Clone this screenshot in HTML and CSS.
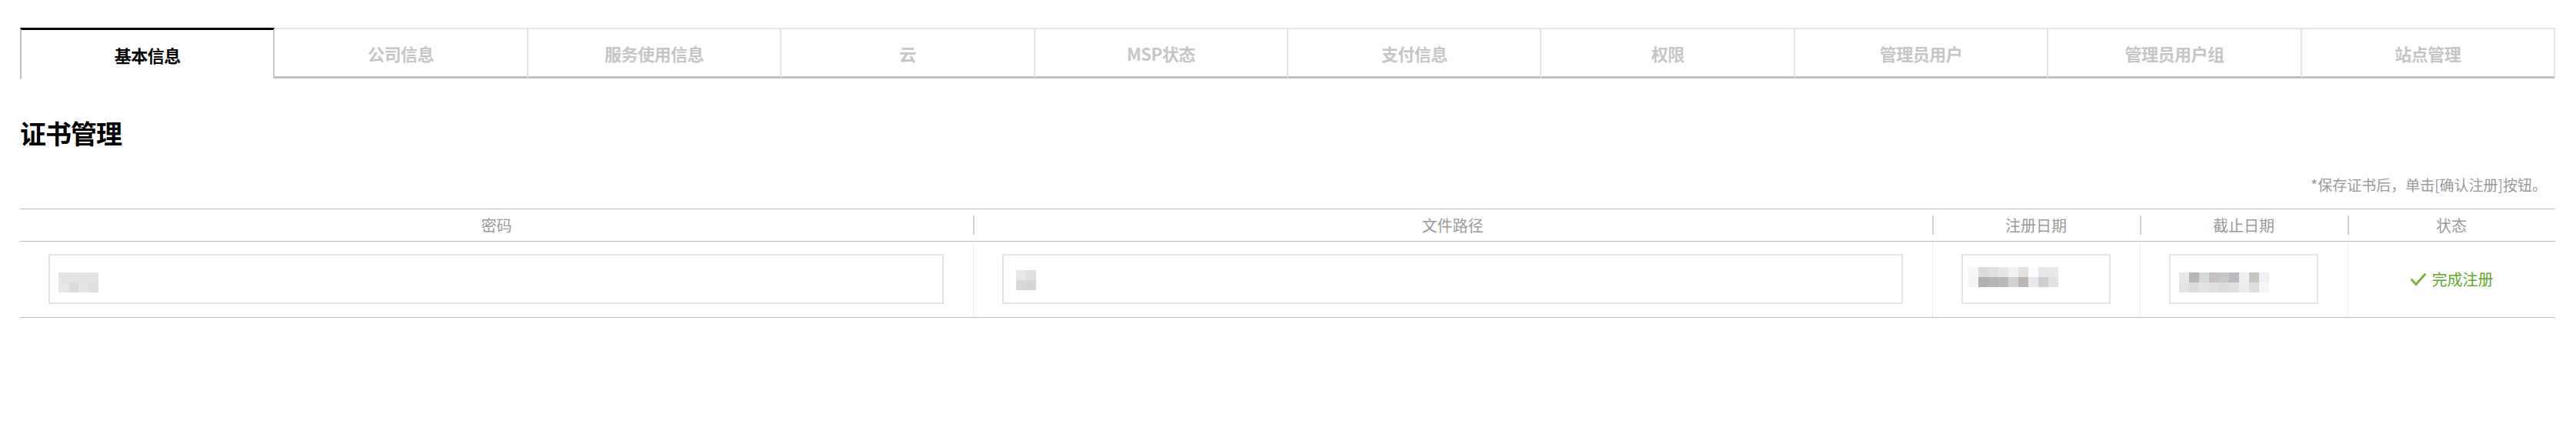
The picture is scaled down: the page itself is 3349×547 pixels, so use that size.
FILE: index.html
```html
<!DOCTYPE html>
<html lang="zh-CN">
<head>
<meta charset="utf-8">
<title>证书管理</title>
<link rel="stylesheet" href="styles.css">
</head>
<body>
<div class="page">
  <nav class="tabs">
    <div class="tab active">基本信息</div>
    <div class="tab">公司信息</div>
    <div class="tab">服务使用信息</div>
    <div class="tab">云</div>
    <div class="tab">MSP状态</div>
    <div class="tab">支付信息</div>
    <div class="tab">权限</div>
    <div class="tab">管理员用户</div>
    <div class="tab">管理员用户组</div>
    <div class="tab">站点管理</div>
  </nav>

  <h2 class="title">证书管理</h2>
  <p class="note">*保存证书后，单击[确认注册]按钮。</p>

  <div class="table">
    <div class="thead">
      <div class="th">密码</div>
      <div class="th sep">文件路径</div>
      <div class="th sep">注册日期</div>
      <div class="th sep">截止日期</div>
      <div class="th sep">状态</div>
    </div>
    <div class="trow">
      <div class="td"><div class="field"><span class="blob blob-pass"></span></div></div>
      <div class="td sep"><div class="field"><span class="blob blob-path"></span></div></div>
      <div class="td sep"><div class="field"><span class="blob blob-date1"></span></div></div>
      <div class="td sep"><div class="field"><span class="blob blob-date2"></span></div></div>
      <div class="td sep status-cell">
        <span class="status">
          <svg class="check" width="20" height="16" viewBox="0 0 20 16" aria-hidden="true">
            <path d="M1.5 8.5 L7 14.5 L18.5 1.5" fill="none" stroke="#76b43c" stroke-width="3" stroke-linecap="round" stroke-linejoin="round"/>
          </svg>
          <span class="status-text">完成注册</span>
        </span>
      </div>
    </div>
  </div>
</div>
</body>
</html>
```

FILE: styles.css
```css
html, body {
  margin: 0;
  padding: 0;
  background: #ffffff;
}

body {
  font-family: "Noto Sans CJK SC", "Noto Sans", "Liberation Sans", sans-serif;
  color: #000;
}

.page {
  padding: 36px 27px 0 26px;
}

/* Tabs */
.tabs {
  display: flex;
  height: 66px;
}

.tab {
  flex: 1 1 0;
  box-sizing: border-box;
  height: 66px;
  display: flex;
  align-items: center;
  justify-content: center;
  font-size: 22px;
  font-weight: 700;
  color: #c6c6c6;
  border-top: 2px solid #e5e5e5;
  border-right: 2px solid #e5e5e5;
  border-bottom: 3px solid #c0c0c0;
  letter-spacing: -0.5px;
}

.tab.active {
  color: #000;
  border-top: 3px solid #000;
  border-left: 2px solid #c0c0c0;
  border-right: 2px solid #c8c8c8;
  border-bottom: none;
}

/* Heading + note */
.title {
  margin: 51px 0 0 0;
  font-size: 34px;
  line-height: 40px;
  font-weight: 700;
  letter-spacing: -1px;
}

.note {
  margin: 35px 11px 0 0;
  text-align: right;
  font-size: 19px;
  line-height: 24px;
  color: #9a9a9a;
}

/* Table */
.table {
  margin-top: 19px;
  border-top: 1px solid #bdbdbd;
  border-bottom: 1px solid #bdbdbd;
}

.thead,
.trow {
  display: grid;
  grid-template-columns: 1239px 1247px 270px 270px 270px;
}

.thead {
  border-bottom: 1px solid #bdbdbd;
  height: 41px;
}

.th {
  position: relative;
  display: flex;
  align-items: center;
  justify-content: center;
  font-size: 20px;
  color: #9a9a9a;
}

.th.sep::before {
  content: "";
  position: absolute;
  left: 0;
  top: 8px;
  width: 2px;
  height: 25px;
  background: #d2d2d2;
}

.trow {
  height: 98px;
}

.td {
  box-sizing: border-box;
  padding: 16px 38px 17px 37px;
}

.td.sep {
  border-left: 1px solid #efefef;
}

.field {
  box-sizing: border-box;
  height: 65px;
  border: 2px solid #e4e4e4;
  background: #fff;
  display: flex;
  align-items: flex-start;
}

.blob {
  display: block;
  height: 26px;
  background-repeat: no-repeat;
}

.blob-pass {
  width: 52px;
  margin: 22px 0 0 11px;
  background-image:
    linear-gradient(to right, #e4e4e4 0 52px),
    linear-gradient(to right, #e8e8e8 0 13px, #dcdcdc 13px 26px, #e6e6e6 26px 39px, #dfdfdf 39px 52px);
  background-size: 52px 13px, 52px 13px;
  background-position: 0 0, 0 13px;
}

.blob-path {
  width: 26px;
  margin: 19px 0 0 16px;
  background-image:
    linear-gradient(to right, #e8e8e8 0 13px, #e0e0e0 13px 26px),
    linear-gradient(to right, #d8d8d8 0 13px, #d6d6d6 13px 26px);
  background-size: 26px 13px, 26px 13px;
  background-position: 0 0, 0 13px;
}

.blob-date1 {
  width: 117px;
  margin: 15px 0 0 7px;
  background-image:
    linear-gradient(to right, #f7f7f5 0 13px, #dcdcdc 13px 26px, #dfe0e2 26px 39px, #e7e7e5 39px 52px, #f2f2f0 52px 65px, #e2e1df 65px 78px, #fbfcfd 78px 91px, #e8e7e8 91px 104px, #e8e9e9 104px 117px),
    linear-gradient(to right, #f4f4f2 0 13px, #b1b1b1 13px 26px, #b3b6b4 26px 39px, #bdbab5 39px 52px, #cdd1d2 52px 65px, #bbb6b0 65px 78px, #e6e9eb 78px 91px, #cfcdd0 91px 104px, #e1e1e1 104px 117px);
  background-size: 117px 13px, 117px 13px;
  background-position: 0 0, 0 13px;
}

.blob-date2 {
  width: 117px;
  margin: 22px 0 0 11px;
  background-image:
    linear-gradient(to right, #e9e7e5 0 13px, #b6b6b6 13px 26px, #d4d9da 26px 39px, #c4c2c1 39px 52px, #c7c7c7 52px 65px, #b9bbc0 65px 78px, #f0f0f0 78px 91px, #c8c4c2 91px 104px, #eef0f3 104px 117px),
    linear-gradient(to right, #e4e4e4 0 13px, #dcdcdc 13px 26px, #e3e4e6 26px 39px, #e0e0e0 39px 52px, #dcdcdc 52px 65px, #e0e0e0 65px 78px, #ececec 78px 91px, #dedede 91px 104px, #f6f6f6 104px 117px);
  background-size: 117px 13px, 117px 13px;
  background-position: 0 0, 0 13px;
}

.status-cell {
  display: flex;
  align-items: center;
  justify-content: center;
  padding: 0;
}

.status {
  display: inline-flex;
  align-items: center;
  gap: 8px;
}

.check {
  display: block;
}

.status-text {
  font-size: 20px;
  color: #64a82a;
  line-height: 24px;
}
```
